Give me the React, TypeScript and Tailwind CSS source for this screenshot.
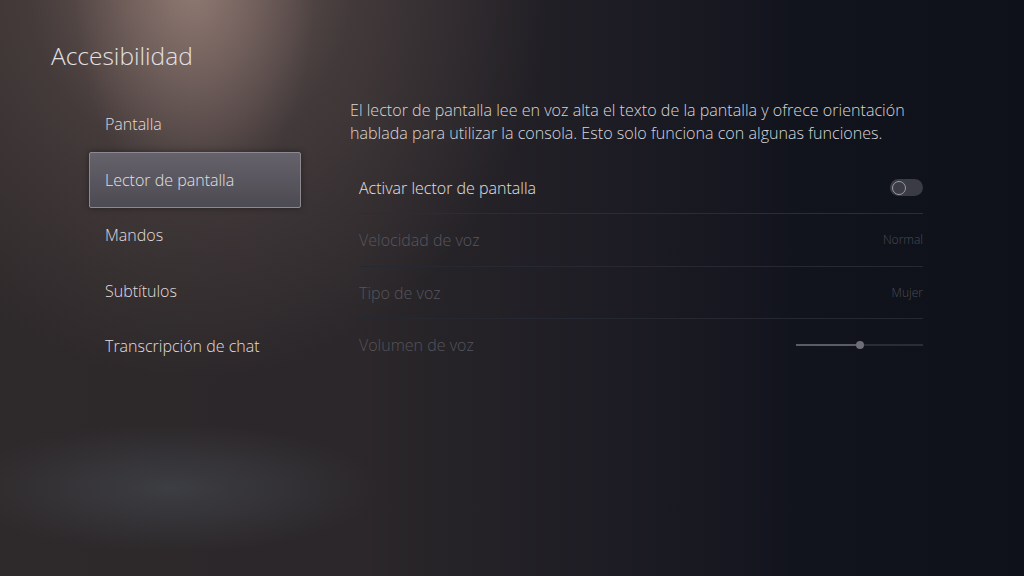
import React from "react";

const menu = ["Pantalla", "Lector de pantalla", "Mandos", "Subtítulos", "Transcripción de chat"];

export default function App() {
  return (
    <div className="relative w-full h-[576px] overflow-hidden bg-[#12141e] font-['Open_Sans','Noto_Sans',sans-serif]">
      {/* background layers */}
      <div className="absolute inset-0 bg-[linear-gradient(90deg,#2e292a_0%,#2b272a_35%,#1d1c24_60%,#12141d_78%,#0e101a_100%)]" />
      <div className="absolute inset-0 bg-[radial-gradient(ellipse_360px_400px_at_190px_-20px,rgba(170,140,130,0.6),rgba(120,100,95,0.3)_45%,rgba(0,0,0,0)_100%)]" />
      <div className="absolute inset-0 bg-[radial-gradient(ellipse_120px_220px_at_195px_-10px,rgba(190,160,150,0.35),rgba(0,0,0,0)_100%)]" />
      <div className="absolute inset-0 bg-[radial-gradient(ellipse_210px_65px_at_170px_488px,rgba(80,88,96,0.45),rgba(0,0,0,0)_100%)]" />

      <div className="relative flex flex-col">
        <h1 className="pl-[51px] pt-[40px] text-[24.5px] leading-[32px] text-[#e4e1e2] font-light">
          Accesibilidad
        </h1>

        <div className="flex mt-[24px]">
          <div className="ml-[89px] w-[212px] flex flex-col">
            {menu.map((m, i) =>
              i === 1 ? (
                <div
                  key={m}
                  className="h-[56px] flex items-center pl-[15px] border border-[#8d8990] rounded-[2px] bg-[linear-gradient(180deg,#66626b,#4c4a52)] shadow-[0_0_6px_rgba(0,0,0,0.4)] text-[16px] font-light text-[#e2e0e3]"
                >
                  {m}
                </div>
              ) : (
                <div key={m} className="h-[55.5px] flex items-center pl-[16px] text-[16px] font-light text-[#e0dddf]">
                  {m}
                </div>
              )
            )}
          </div>

          <div className="ml-[49px] flex flex-col">
            <p className="mt-[3px] text-[16.1px] leading-[23px] font-light text-[#d6d6da] w-[600px] whitespace-nowrap">
              El lector de pantalla lee en voz alta el texto de la pantalla y ofrece orientación
              <br />
              hablada para utilizar la consola. Esto solo funciona con algunas funciones.
            </p>

            <div className="mt-[17px] ml-[9px] w-[564px] flex flex-col">
              <div className="h-[52px] flex items-center justify-between border-b border-[#2a2c36]">
                <span className="text-[16px] font-light text-[#e0e0e4]">Activar lector de pantalla</span>
                <div className="w-[33px] h-[17px] rounded-full bg-[#3a3b44] flex items-center pl-[2px]">
                  <div className="w-[14px] h-[14px] rounded-full border-[1.5px] border-[#9a9aa2]" />
                </div>
              </div>
              <div className="h-[53px] flex items-center justify-between border-b border-[#262832]">
                <span className="text-[16px] font-light text-[#57565e]">Velocidad de voz</span>
                <span className="text-[12px] font-light text-[#4a4b54]">Normal</span>
              </div>
              <div className="h-[52px] flex items-center justify-between border-b border-[#252731]">
                <span className="text-[16px] font-light text-[#55545c]">Tipo de voz</span>
                <span className="text-[12px] font-light text-[#4a4b54]">Mujer</span>
              </div>
              <div className="h-[52px] flex items-center justify-between">
                <span className="text-[16px] font-light text-[#54535b]">Volumen de voz</span>
                <div className="relative w-[127px] h-[8px] flex items-center">
                  <div className="h-[2px] w-[64px] bg-[#5c5c64]" />
                  <div className="h-[2px] flex-1 bg-[#2a2c36]" />
                  <div className="absolute left-[60px] top-0 w-[8px] h-[8px] rounded-full bg-[#6e6e76]" />
                </div>
              </div>
            </div>
          </div>
        </div>
      </div>
    </div>
  );
}
